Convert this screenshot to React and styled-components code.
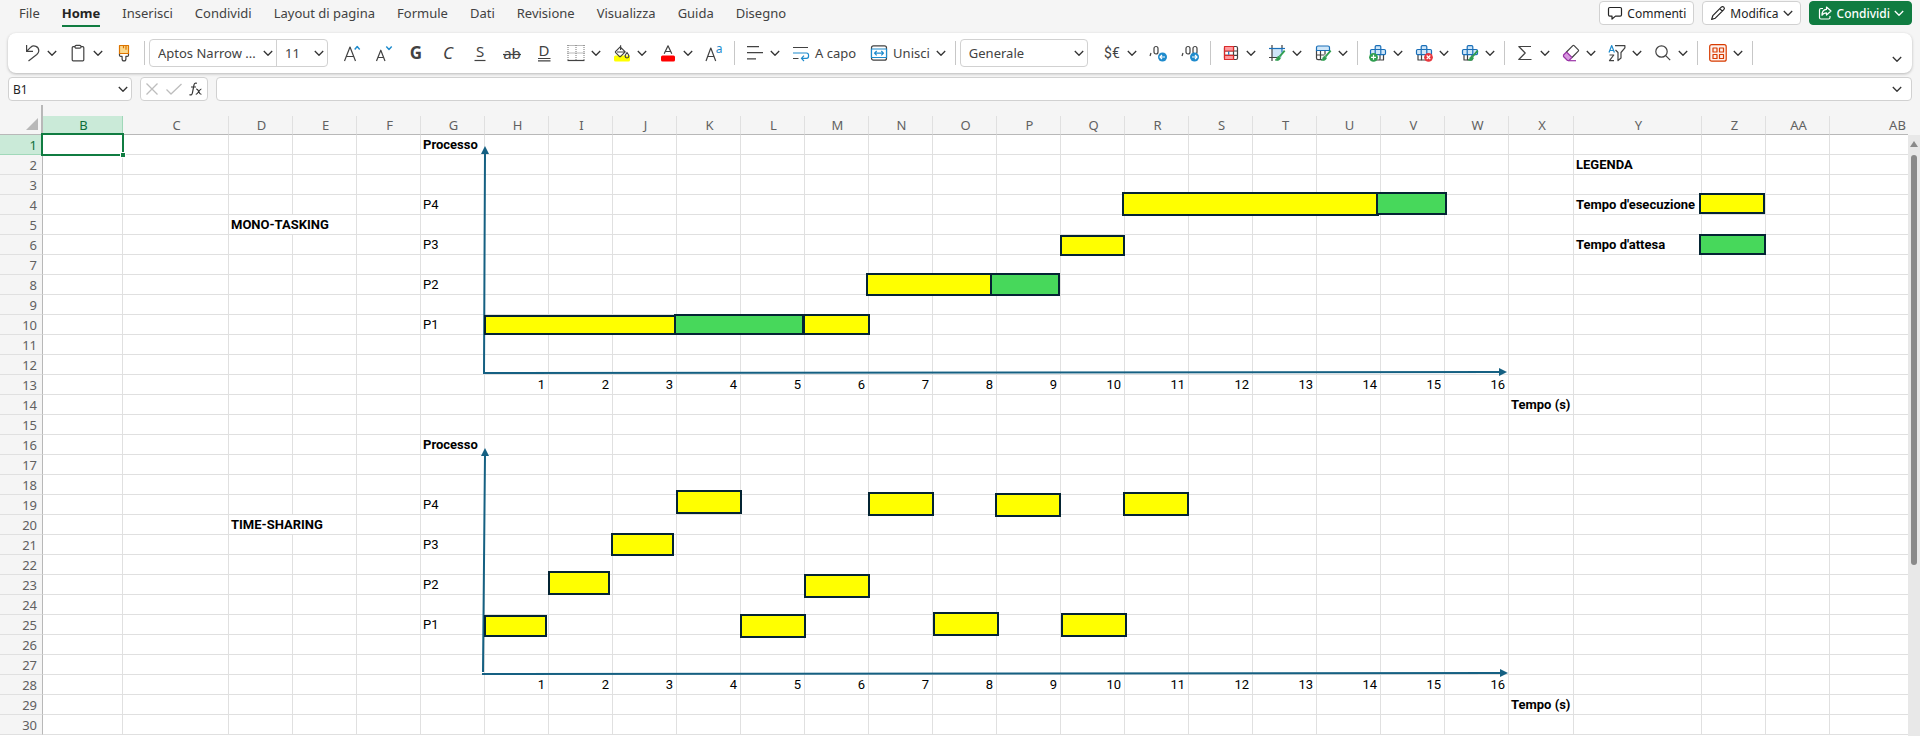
import React from "react";
import styled, { createGlobalStyle, css } from "styled-components";

const UI_FONT = '"Noto Sans", "Open Sans", sans-serif';
const CELL_FONT = 'Roboto, "Liberation Sans", sans-serif';
const INK = "#424242";
const BLUE = "#1e8bcd";
const GREEN = "#107c41";
const AXIS = "#156082";

const GlobalStyle = createGlobalStyle`
  *, *::before, *::after { box-sizing: border-box; }
  body { margin: 0; background: #f5f5f5; color: ${INK}; font-family: ${UI_FONT}; font-size: 13px; }
  button, input, select { font: inherit; color: inherit; margin: 0; }
  svg { display: block; flex: none; overflow: visible; }
`;

const Page = styled.div`
  display: flex;
  flex-direction: column;
  height: 100vh;
  overflow: hidden;
`;

/* ---------- menu bar ---------- */

const MenuBar = styled.header`
  display: flex;
  align-items: flex-start;
  justify-content: space-between;
  height: 33px;
  padding: 0 8px 0 19px;
`;

const Tabs = styled.nav`
  display: flex;
  gap: 22px;
`;

const Tab = styled.a`
  height: 27px;
  line-height: 26px;
  color: ${(p) => (p.$active ? "#242424" : INK)};
  font-weight: ${(p) => (p.$active ? 700 : 400)};
  text-decoration: none;
  white-space: nowrap;
  border-bottom: 2px solid ${(p) => (p.$active ? GREEN : "transparent")};
`;

const Actions = styled.div`
  display: flex;
  gap: 8px;
  padding-top: 1px;
`;

const ActionButton = styled.button`
  display: flex;
  align-items: center;
  gap: 4px;
  height: 24px;
  padding: 0 7px;
  border: 1px solid ${(p) => (p.$primary ? GREEN : "#d1d1d1")};
  border-radius: 4px;
  background: ${(p) => (p.$primary ? GREEN : "#fff")};
  color: ${(p) => (p.$primary ? "#fff" : "#242424")};
  font-size: 12px;
  font-weight: ${(p) => (p.$primary ? 500 : 400)};
`;

/* ---------- ribbon ---------- */

const Ribbon = styled.div`
  display: flex;
  align-items: center;
  height: 40px;
  margin: 0 8px;
  padding: 0 8px;
  border-radius: 8px;
  background: #fff;
  box-shadow: 0 1px 3px rgba(0, 0, 0, 0.25);
`;

const ToolButton = styled.button`
  display: flex;
  align-items: center;
  height: 28px;
  padding: 0 ${(p) => (p.$menu ? 5 : 6)}px 0 6px;
  border: 0;
  background: transparent;
  white-space: nowrap;
`;

const ToolLabel = styled.span`
  padding: 0 1px 0 4px;
`;

const MenuArrow = styled.span`
  padding-left: 5px;
`;

const Divider = styled.div`
  width: 1px;
  height: 24px;
  margin: 0 4px;
  background: #c7c7c7;
`;

const Spacer = styled.div`
  flex: 1;
`;

const RibbonExpander = styled.button`
  align-self: flex-end;
  padding: 9px 2px;
  border: 0;
  background: transparent;
`;

const Pickers = styled.div`
  display: flex;
  margin-right: 8px;
  border: 1px solid #d1d1d1;
  border-radius: 4px;
`;

const Picker = styled.label`
  display: grid;
  grid-template-columns: 1fr;
  align-items: center;
  width: ${(p) => p.$width}px;
  height: 26px;

  & + & {
    border-left: 1px solid #d1d1d1;
  }

  select {
    grid-area: 1 / 1;
    width: 100%;
    height: 26px;
    padding: 0 12px 0 8px;
    border: 0;
    background: transparent;
    appearance: none;
  }

  svg {
    grid-area: 1 / 1;
    justify-self: end;
    margin-right: 3px;
    pointer-events: none;
  }
`;

/* ---------- formula bar ---------- */

const FormulaBar = styled.div`
  display: flex;
  gap: 8px;
  height: 24px;
  margin: 4px 8px 0;
`;

const Field = styled.div`
  display: flex;
  align-items: center;
  border: 1px solid #d1d1d1;
  border-radius: 4px;
  background: #fff;
  ${(p) =>
    p.$width
      ? css`
          width: ${p.$width}px;
        `
      : css`
          flex: 1;
        `}
`;

const FieldInput = styled.input`
  flex: 1;
  min-width: 0;
  height: 22px;
  padding: 0 4px;
  border: 0;
  background: transparent;
  color: #242424;
  font-size: 12px;
  outline: 0;
`;

const FieldButton = styled.button`
  display: flex;
  justify-content: center;
  width: ${(p) => p.$width}px;
  padding: 0;
  border: 0;
  background: transparent;
`;

/* ---------- sheet ---------- */

const SheetArea = styled.main`
  display: flex;
  flex: 1;
  min-height: 0;
  margin-top: 4px;
`;

const SheetColumn = styled.div`
  display: flex;
  flex: 1;
  flex-direction: column;
  min-width: 0;
`;

const FreezeMark = styled.div`
  width: 43px;
  height: 11px;
  border-right: 2px solid #b8b8b8;
`;

const SheetView = styled.div`
  position: relative;
  flex: 1;
  min-height: 0;
  overflow: hidden;
  background: #fff;
`;

const Grid = styled.table`
  table-layout: fixed;
  width: 1964px;
  border-collapse: separate;
  border-spacing: 0;
  background: #fff;
  color: #000;
  font-size: 13px;
  line-height: 18px;
`;

const Corner = styled.td`
  height: 19px;
  padding: 0 3px 2px 0;
  border-right: 2px solid #b8b8b8;
  border-bottom: 1px solid #b8b8b8;
  background: #f5f5f5;

  svg {
    margin-left: auto;
  }
`;

const ColumnHead = styled.th`
  height: 19px;
  padding: 0 0 0 2px;
  border-right: 1px solid ${(p) => (p.$selected ? "#a0d8b9" : "#e0e0e0")};
  border-bottom: 1px solid #b8b8b8;
  background: ${(p) => (p.$selected ? "#caead8" : "#f5f5f5")};
  color: ${(p) => (p.$selected ? "#0f703b" : "#616161")};
  font-weight: 400;
`;

const RowHead = styled.th`
  height: 20px;
  padding: 0 5px 0 0;
  border-right: 1px solid #b8b8b8;
  border-bottom: 1px solid ${(p) => (p.$selected ? "#a0d8b9" : "#e0e0e0")};
  background: ${(p) => (p.$selected ? "#caead8" : "#f5f5f5")};
  color: ${(p) => (p.$selected ? "#0f703b" : "#616161")};
  font-weight: 400;
  text-align: right;
`;

const Cell = styled.td`
  height: 20px;
  padding: 1px 3px 0 2px;
  border-right: 1px solid #e0e0e0;
  border-bottom: 1px solid #e0e0e0;
  font-family: ${CELL_FONT};
  font-size: 13px;
  font-weight: ${(p) => (p.$bold ? 700 : 400)};
  text-align: ${(p) => (p.$number ? "right" : "left")};
  white-space: nowrap;
`;

const ActiveCell = styled.td`
  position: relative;
  height: 20px;
  padding: 0;

  &::before {
    content: "";
    position: absolute;
    inset: -2px -1px -1px -2px;
    border: 2px solid ${GREEN};
  }

  &::after {
    content: "";
    position: absolute;
    right: -3px;
    bottom: -3px;
    width: 6px;
    height: 6px;
    border: 1px solid #fff;
    background: ${GREEN};
  }
`;

const Drawing = styled.svg`
  position: absolute;
  top: 0;
  left: 0;
  pointer-events: none;
`;

const ScrollBar = styled.div`
  display: flex;
  flex-direction: column;
  align-items: center;
  width: 12px;
  margin-top: 30px;
  padding-top: 6px;
  background: #e8e8e8;
`;

const Thumb = styled.div`
  width: 6px;
  height: 410px;
  margin-top: 8px;
  border-radius: 3px;
  background: #8a8a8a;
`;

/* ---------- icons ---------- */

const Glyph = ({ children, size = 20, color = INK, width = 1.2 }) => (
  <svg
    width={size}
    height={size}
    viewBox={`0 0 ${size} ${size}`}
    fill="none"
    stroke={color}
    strokeWidth={width}
    strokeLinejoin="round"
    aria-hidden="true"
  >
    {children}
  </svg>
);

const Letter = ({ x = 10, y = 16, size = 17, fill = INK, children, ...rest }) => (
  <text x={x} y={y} fontSize={size} fill={fill} stroke="none" textAnchor="middle" {...rest}>
    {children}
  </text>
);

const Chevron = ({ color = "#333" }) => (
  <Glyph size={10} color={color} width={1.3}>
    <path d="M.8 3 5 7.2 9.2 3" />
  </Glyph>
);

const Brush = () => (
  <g stroke="#2f9e4f">
    <path d="m17.700 7.600-5.200 6" strokeWidth="1.8" />
    <path d="M12 13.400c-1.800 0-2 1-2.300 2.200-.2.800-.9 1.200-1.500 1.400 2.400.9 5 .3 5.200-2Z" fill="#2f9e4f" strokeWidth=".8" />
  </g>
);

const Cross = ({ left = true, right = true }) => (
  <>
    {left && <path d="M4 11.700V17h3.500" />}
    {right && <path d="M15.500 11.700V17h-3" />}
    <path d="M7.500 12V17H12v-5" />
    <path d="M7.200 6.500V3.800c0-.7.500-1.200 1.200-1.200h3.200c.7 0 1.200.5 1.200 1.200v2.700h3.500c.7 0 1.200.5 1.200 1.200v2.800c0 .7-.5 1.200-1.200 1.200H3.700c-.7 0-1.200-.5-1.200-1.200V7.700c0-.7.500-1.200 1.200-1.200Z" fill="#cfe6f8" stroke="#1a6fb8" />
    <path d="M7.200 6.500v5.200M12.800 6.500v5.200M7.200 6.500h5.600" stroke="#1a6fb8" />
  </>
);

const icons = {
  undo: (
    <Glyph>
      <path d="M4.600 2v6.400H11M4.800 8.200l4-4C11.600 1.600 17 3.400 16.800 8c-.1 1.600-1 2.600-2 3.500L6.500 18" />
    </Glyph>
  ),
  paste: (
    <Glyph>
      <path d="M7 3.700H5.200c-.6 0-1 .4-1 1v12.100c0 .6.400 1 1 1h9.600c.6 0 1-.4 1-1V4.700c0-.6-.4-1-1-1H13" />
      <rect x="7" y="2.300" width="6" height="2.800" rx="1.200" />
    </Glyph>
  ),
  painter: (
    <Glyph>
      <path d="M5.500 10.500v1.700c0 .7.500 1.200 1.200 1.200h1.400V16c0 2.600 3.800 2.600 3.800 0v-2.600h1.400c.7 0 1.200-.5 1.200-1.200v-1.700" />
      <path d="M5.500 2.500h9v8h-9Z" fill="#fbd98e" stroke="#dd7500" />
      <path d="M9.500 2.500v2.800M12 2.500v4.200" stroke="#dd7500" />
    </Glyph>
  ),
  grow: (
    <Glyph>
      <path d="M2.500 18 8 4l5.500 14M4.300 13.500h7.400" />
      <path d="m12.700 6.500 2.500-3 2.500 3" stroke={BLUE} strokeWidth="1.400" />
    </Glyph>
  ),
  shrink: (
    <Glyph>
      <path d="M2.500 18 6.800 7.200 11 18M4 14.500h5.700" />
      <path d="m12.300 3.500 2.700 3 2.700-3" stroke={BLUE} strokeWidth="1.400" />
    </Glyph>
  ),
  bold: <Glyph><Letter fontWeight="700" y={16}>G</Letter></Glyph>,
  italic: <Glyph><Letter fontStyle="italic" y={16}>C</Letter></Glyph>,
  underline: (
    <Glyph>
      <Letter y={14} size={15}>S</Letter>
      <path d="M4.500 17.500h11" />
    </Glyph>
  ),
  strike: (
    <Glyph>
      <Letter size={15} y={16}>ab</Letter>
      <path d="M1 11.500h18" />
    </Glyph>
  ),
  doubleUnderline: (
    <Glyph>
      <Letter y={13} size={15}>D</Letter>
      <path d="M4 15.500h12.500M4 17.800h12.500" />
    </Glyph>
  ),
  borders: (
    <Glyph color="#777">
      <path d="M1.500 2.500h17M1.500 10h17M2 2v16M10 2v16M18 2v16" strokeDasharray="1 1" strokeWidth="1" />
      <path d="M1.500 17.500h17" stroke={INK} />
    </Glyph>
  ),
  fill: (
    <Glyph>
      <rect x="2" y="12.500" width="16" height="6" rx="1.500" fill="#ff0" stroke="none" />
      <path d="m8.200 3.800-4.500 4.500c-.4.400-.4 1 0 1.400l3.600 3.600c.4.400 1 .4 1.400 0l4.500-4.500ZM8.600 7V2.200M5 9h7.500" />
      <path d="M15 9.500c1.200 1.600 1.900 2.600 1.900 3.600 0 2.500-3.800 2.500-3.800 0 0-1 .7-2 1.900-3.600Z" />
    </Glyph>
  ),
  color: (
    <Glyph>
      <path d="M6.200 10.800 10 2.800l3.800 8M7.300 8.500h5.400" />
      <rect x="3" y="12.500" width="14" height="6" rx="1.500" fill="#f00" stroke="none" />
    </Glyph>
  ),
  format: (
    <Glyph>
      <path d="M2 18 6.800 5l4.900 13M3.700 13.500H10" />
      <Letter x={15} y={10} size={12} fill={BLUE}>a</Letter>
    </Glyph>
  ),
  align: <Glyph><path d="M2 3.700h12M2 9.700h16M2 15.800h9" /></Glyph>,
  wrap: (
    <Glyph>
      <path d="M2 4.500h15M2 15.500h5.500" />
      <path d="M2 10h13.500c2.800 0 2.800 5.300 0 5.300h-4.800M13 12.700l-2.600 2.600L13 18" stroke={BLUE} />
    </Glyph>
  ),
  merge: (
    <Glyph>
      <rect x="2.500" y="2.800" width="15" height="14.400" rx="2" />
      <path d="M2.500 6h15v8.500h-15Z" stroke={BLUE} fill="#fff" />
      <path d="M5.500 10.200h9M7.700 8l-2.200 2.200 2.200 2.200M12.300 8l2.200 2.200-2.200 2.200" stroke={BLUE} />
    </Glyph>
  ),
  currency: (
    <Glyph>
      <Letter x={6} y={15} size={14} fontFamily="Roboto">$</Letter>
      <Letter x={14} y={15} size={14} fontFamily="Roboto">€</Letter>
    </Glyph>
  ),
  moreDigits: (
    <Glyph>
      <path d="m3 10-1 3" />
      <rect x="6" y="3.500" width="4" height="7.500" rx="2" />
      <circle cx="14.500" cy="14" r="4.500" fill={BLUE} stroke="none" />
      <path d="M17 14h-5m2-2-2 2 2 2" stroke="#fff" />
    </Glyph>
  ),
  fewerDigits: (
    <Glyph>
      <path d="m3 10-1 3" />
      <rect x="6" y="3.500" width="4" height="7.500" rx="2" />
      <rect x="13" y="3.500" width="4" height="7.500" rx="2" />
      <circle cx="14.500" cy="14" r="4.500" fill={BLUE} stroke="none" />
      <path d="M12 14h5m-2-2 2 2-2 2" stroke="#fff" />
    </Glyph>
  ),
  conditional: (
    <Glyph>
      <rect x="3.500" y="3.500" width="13" height="13" rx="1.500" />
      <path d="M12.500 3.500v13M3.500 8h13M3.500 12.300h13" />
      <path d="M3.500 3.500h9V8h-9ZM3.500 12.300h9v4.200h-9Z" fill="#ff9a9e" stroke="#d92c2c" />
      <path d="M3.500 8v4.300" stroke="#d92c2c" />
      <path d="M7.700 8.600v3.100" stroke="#1a6fb8" />
    </Glyph>
  ),
  cellStyle: (
    <Glyph>
      <rect x="5" y="5.500" width="10" height="9" fill="#cfe6f8" stroke="none" />
      <path d="M5 2v16M15 2v3.500M2 14.500h8" />
      <path d="M2 5.500h16" stroke="#1a6fb8" />
      <path d="M15 5.500v4" stroke="#1a6fb8" />
      <Brush />
    </Glyph>
  ),
  tableStyle: (
    <Glyph>
      <path d="M3.500 7v8c0 1 .7 1.600 1.600 1.600H9M7.500 7.500v9M12 7.500v4M3.500 12h8" />
      <path d="M3.500 7.500V4.600c0-1 .6-1.600 1.500-1.600h10c.9 0 1.500.6 1.500 1.600v2.900Z" fill="#cfe6f8" stroke="#1a6fb8" />
      <Brush />
    </Glyph>
  ),
  insert: (
    <Glyph>
      <Cross left={false} />
      <circle cx="5.500" cy="14.300" r="4.400" fill="#2f9e4f" stroke="none" />
      <path d="M5.500 11.800v5M3 14.300h5" stroke="#fff" />
    </Glyph>
  ),
  remove: (
    <Glyph>
      <Cross right={false} />
      <circle cx="14.500" cy="14.300" r="4.400" fill="#e8373e" stroke="none" />
      <path d="m12.700 12.500 3.600 3.600m0-3.600-3.600 3.600" stroke="#fff" />
    </Glyph>
  ),
  formatCells: (
    <Glyph>
      <Cross right={false} />
      <Brush />
    </Glyph>
  ),
  sum: <Glyph><path d="M16 3.500H3.800l6.400 6.500-6.400 6.500H16.500" /></Glyph>,
  erase: (
    <Glyph>
      <path d="m2.500 12 3-3 5.500 5.500-3 3H6.500l-4-4Z" fill="#d89ae0" stroke="#9b35a8" />
      <path d="m5.500 9 6.300-6.300c.4-.4.900-.4 1.300 0l4.200 4.200c.4.400.4.900 0 1.300L11 14.500" />
      <path d="M7 17.700h8" stroke="#9b35a8" />
    </Glyph>
  ),
  sort: (
    <Glyph>
      <path d="M2 9.500 4.700 2.500l2.700 7M2.800 7.500h3.800" stroke={BLUE} />
      <path d="M2.500 12h4.300l-4.300 5.700h4.500" />
      <path d="M8 2.700h9.900v2.100L14 9.500V15l-3 2.500v-8L8.500 7" />
    </Glyph>
  ),
  find: (
    <Glyph>
      <circle cx="8.500" cy="8.500" r="5.700" />
      <path d="m12.700 12.700 4.500 4.500" />
    </Glyph>
  ),
  addins: (
    <Glyph color="#d83b01">
      <rect x="1.700" y="1.700" width="16.500" height="16.500" rx="2" fill="#fdf1ec" />
      <path d="M5 5h4v4H5ZM11.500 5h4v4h-4ZM5 11.500h4v4H5ZM11.500 11.500h4v4h-4Z" />
    </Glyph>
  ),
};

const CommentIcon = () => (
  <Glyph size={16} color="#242424">
    <path d="M2.800 2.500h10.400c.8 0 1.300.5 1.300 1.300v6c0 .8-.5 1.300-1.300 1.300H8.500L5 14v-2.900H2.800c-.8 0-1.300-.5-1.300-1.300v-6c0-.8.500-1.300 1.300-1.300Z" />
  </Glyph>
);

const PencilIcon = () => (
  <Glyph size={16} color="#242424">
    <path d="M11.300 2.200c.8-.8 1.800-.7 2.500 0s.8 1.700 0 2.500L5.300 13.200l-3.700 1.200 1.200-3.700ZM9.800 3.700l2.500 2.500" />
  </Glyph>
);

const ShareIcon = () => (
  <Glyph size={16} color="#fff">
    <path d="M6 3.500H4c-1 0-1.500.5-1.500 1.500v7.500c0 1 .5 1.500 1.500 1.500h7.500c1 0 1.500-.5 1.500-1.500V11" />
    <path d="M9.500 2 14 6l-4.500 4V7.800C7.500 7.800 6 8.500 5 10.300 5 7 6.500 4.500 9.500 4.300Z" />
  </Glyph>
);

/* ---------- ribbon parts ---------- */

const Tool = ({ icon, name, label, menu }) => (
  <ToolButton type="button" aria-label={name} $menu={menu}>
    {icons[icon]}
    {label && <ToolLabel>{label}</ToolLabel>}
    {menu && (
      <MenuArrow>
        <Chevron />
      </MenuArrow>
    )}
  </ToolButton>
);

const ChoiceBox = ({ name, value, width }) => (
  <Picker $width={width}>
    <select aria-label={name} defaultValue={value}>
      <option>{value}</option>
    </select>
    <Chevron />
  </Picker>
);

/* ---------- sheet data ---------- */

const COLUMNS = [
  ["B", 80],
  ["C", 106],
  ..."DEFGHIJKLMNOPQRSTUVW".split("").map((name) => [name, 64]),
  ["X", 65],
  ["Y", 128],
  ["Z", 64],
  ["AA", 64],
  ["AB", 134],
];

const ROW_COUNT = 30;

const CELLS = {
  G1: { text: "Processo", bold: true },
  Y2: { text: "LEGENDA", bold: true },
  G4: { text: "P4" },
  Y4: { text: "Tempo d'esecuzione", bold: true },
  D5: { text: "MONO-TASKING", bold: true, span: 2 },
  G6: { text: "P3" },
  Y6: { text: "Tempo d'attesa", bold: true },
  G8: { text: "P2" },
  G10: { text: "P1" },
  X14: { text: "Tempo (s)", bold: true },
  G16: { text: "Processo", bold: true },
  G19: { text: "P4" },
  D20: { text: "TIME-SHARING", bold: true, span: 2 },
  G21: { text: "P3" },
  G23: { text: "P2" },
  G25: { text: "P1" },
  X29: { text: "Tempo (s)", bold: true },
};

"HIJKLMNOPQRSTUVW".split("").forEach((column, i) => {
  CELLS[`${column}13`] = { text: i + 1, number: true };
  CELLS[`${column}28`] = { text: i + 1, number: true };
});

const RUN = "#ffff00";
const WAIT = "#47d85b";

/* left, top, right, bottom, fill */
const BARS = [
  [484, 199, 676, 219, RUN],
  [674, 198, 804, 219, WAIT],
  [803, 198, 870, 219, RUN],
  [866, 157, 992, 180, RUN],
  [990, 157, 1060, 180, WAIT],
  [1060, 119, 1125, 140, RUN],
  [1122, 76, 1379, 100, RUN],
  [1376, 76, 1447, 99, WAIT],
  [1699, 77, 1765, 98, RUN],
  [1699, 118, 1766, 139, WAIT],
  [484, 499, 547, 521, RUN],
  [548, 455, 610, 479, RUN],
  [611, 417, 674, 440, RUN],
  [676, 374, 742, 398, RUN],
  [740, 498, 806, 522, RUN],
  [804, 458, 870, 482, RUN],
  [868, 376, 934, 400, RUN],
  [933, 496, 999, 520, RUN],
  [995, 377, 1061, 401, RUN],
  [1061, 497, 1127, 521, RUN],
  [1123, 376, 1189, 400, RUN],
];

const Row = ({ row }) => {
  const cells = [];
  for (let i = 0; i < COLUMNS.length; i += 1) {
    const id = `${COLUMNS[i][0]}${row}`;
    const cell = CELLS[id] || {};
    if (id === "B1") {
      cells.push(<ActiveCell key={id} />);
    } else {
      cells.push(
        <Cell key={id} colSpan={cell.span} $bold={cell.bold} $number={cell.number}>
          {cell.text}
        </Cell>
      );
    }
    if (cell.span) i += cell.span - 1;
  }
  return (
    <tr>
      <RowHead scope="row" $selected={row === 1}>
        {row}
      </RowHead>
      {cells}
    </tr>
  );
};

const Charts = () => (
  <Drawing width="1908" height="620" viewBox="0 0 1908 620" aria-hidden="true">
    <g stroke={AXIS} strokeWidth="2">
      <path d="M484 258 485 36M483 257 1500 256M483 556 485 338M482 558 1501 557" />
    </g>
    <path
      fill={AXIS}
      d="M485 30l4 8h-8ZM1507 256l-8-4v8ZM485 332l4 8h-8ZM1508 557l-8-4v8Z"
    />
    {BARS.map(([left, top, right, bottom, fill]) => (
      <rect
        key={`${left}-${top}`}
        x={left + 1}
        y={top + 1}
        width={right - left - 2}
        height={bottom - top - 2}
        fill={fill}
        stroke="#042433"
        strokeWidth="2"
      />
    ))}
  </Drawing>
);

const MENU = [
  "File",
  "Home",
  "Inserisci",
  "Condividi",
  "Layout di pagina",
  "Formule",
  "Dati",
  "Revisione",
  "Visualizza",
  "Guida",
  "Disegno",
];

export default function App() {
  return (
    <Page>
      <GlobalStyle />
      <MenuBar>
        <Tabs>
          {MENU.map((name) => (
            <Tab key={name} href="#" $active={name === "Home"}>
              {name}
            </Tab>
          ))}
        </Tabs>
        <Actions>
          <ActionButton type="button">
            <CommentIcon />
            Commenti
          </ActionButton>
          <ActionButton type="button">
            <PencilIcon />
            Modifica
            <Chevron />
          </ActionButton>
          <ActionButton type="button" $primary>
            <ShareIcon />
            Condividi
            <Chevron color="#fff" />
          </ActionButton>
        </Actions>
      </MenuBar>

      <Ribbon role="toolbar">
        <Tool icon="undo" name="Annulla" menu />
        <Tool icon="paste" name="Incolla" menu />
        <Tool icon="painter" name="Copia formato" />
        <Divider />
        <Pickers>
          <ChoiceBox name="Tipo di carattere" value="Aptos Narrow ..." width={126} />
          <ChoiceBox name="Dimensione carattere" value="11" width={51} />
        </Pickers>
        <Tool icon="grow" name="Aumenta dimensione" />
        <Tool icon="shrink" name="Riduci dimensione" />
        <Tool icon="bold" name="Grassetto" />
        <Tool icon="italic" name="Corsivo" />
        <Tool icon="underline" name="Sottolineato" />
        <Tool icon="strike" name="Barrato" />
        <Tool icon="doubleUnderline" name="Doppia sottolineatura" />
        <Tool icon="borders" name="Bordi" menu />
        <Tool icon="fill" name="Colore riempimento" menu />
        <Tool icon="color" name="Colore carattere" menu />
        <Tool icon="format" name="Formato carattere" />
        <Divider />
        <Tool icon="align" name="Allineamento" menu />
        <Tool icon="wrap" name="A capo" label="A capo" />
        <Tool icon="merge" name="Unisci" label="Unisci" menu />
        <Divider />
        <Pickers>
          <ChoiceBox name="Formato numero" value="Generale" width={126} />
        </Pickers>
        <Tool icon="currency" name="Valuta" menu />
        <Tool icon="moreDigits" name="Aumenta decimali" />
        <Tool icon="fewerDigits" name="Diminuisci decimali" />
        <Divider />
        <Tool icon="conditional" name="Formattazione condizionale" menu />
        <Tool icon="cellStyle" name="Stili cella" menu />
        <Tool icon="tableStyle" name="Formatta come tabella" menu />
        <Divider />
        <Tool icon="insert" name="Inserisci celle" menu />
        <Tool icon="remove" name="Elimina celle" menu />
        <Tool icon="formatCells" name="Formato celle" menu />
        <Divider />
        <Tool icon="sum" name="Somma automatica" menu />
        <Tool icon="erase" name="Cancella" menu />
        <Tool icon="sort" name="Ordina e filtra" menu />
        <Tool icon="find" name="Trova" menu />
        <Divider />
        <Tool icon="addins" name="Componenti aggiuntivi" menu />
        <Divider />
        <Spacer />
        <RibbonExpander type="button" aria-label="Opzioni barra multifunzione">
          <Chevron />
        </RibbonExpander>
      </Ribbon>

      <FormulaBar>
        <Field $width={124}>
          <FieldInput aria-label="Casella nome" defaultValue="B1" />
          <FieldButton type="button" aria-label="Elenco nomi" $width={16}>
            <Chevron />
          </FieldButton>
        </Field>
        <Field $width={68}>
          <FieldButton type="button" aria-label="Annulla immissione" $width={22}>
            <Glyph size={16} color="#bdbdbd" width={1.3}>
              <path d="m2.500 2.500 11 11m0-11-11 11" />
            </Glyph>
          </FieldButton>
          <FieldButton type="button" aria-label="Conferma immissione" $width={22}>
            <Glyph size={16} color="#bdbdbd" width={1.3}>
              <path d="m.5 8.500 4.500 4.500L15.500 3" />
            </Glyph>
          </FieldButton>
          <FieldButton type="button" aria-label="Inserisci funzione" $width={22}>
            <Glyph size={16} color="#333">
              <path d="M8.800 2.400C7 1.500 6.200 2.600 5.900 4.300L4.400 12c-.3 1.600-1.200 2.300-2.900 1.600M3 6h5" />
              <path d="M8.200 8.200c2.600-.9 2.600 5.700 5.200 5M13.400 8c-2 0-3.300 5.300-5.600 5.300" />
            </Glyph>
          </FieldButton>
        </Field>
        <Field>
          <FieldInput aria-label="Barra della formula" defaultValue="" />
          <FieldButton type="button" aria-label="Espandi barra della formula" $width={28}>
            <Chevron />
          </FieldButton>
        </Field>
      </FormulaBar>

      <SheetArea>
        <SheetColumn>
          <FreezeMark />
          <SheetView>
            <Grid>
              <colgroup>
                <col width="43" />
                {COLUMNS.map(([name, width]) => (
                  <col key={name} width={width} />
                ))}
              </colgroup>
              <thead>
                <tr>
                  <Corner>
                    <svg width="12" height="12" viewBox="0 0 12 12" aria-hidden="true">
                      <path d="M12 0v12H0Z" fill="#b8b8b8" />
                    </svg>
                  </Corner>
                  {COLUMNS.map(([name]) => (
                    <ColumnHead key={name} scope="col" $selected={name === "B"}>
                      {name}
                    </ColumnHead>
                  ))}
                </tr>
              </thead>
              <tbody>
                {Array.from({ length: ROW_COUNT }, (_, i) => (
                  <Row key={i} row={i + 1} />
                ))}
              </tbody>
            </Grid>
            <Charts />
          </SheetView>
        </SheetColumn>
        <ScrollBar>
          <svg width="8" height="6" viewBox="0 0 8 6" aria-hidden="true">
            <path d="M4 0 8 6H0Z" fill="#8a8a8a" />
          </svg>
          <Thumb />
        </ScrollBar>
      </SheetArea>
    </Page>
  );
}
